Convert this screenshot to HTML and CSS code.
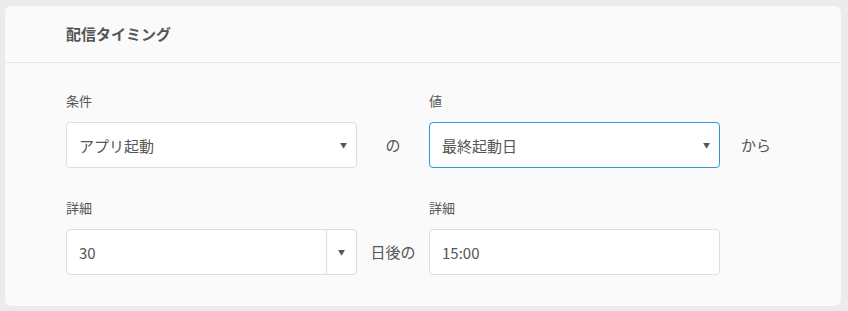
FILE: index.html
```html
<!DOCTYPE html>
<html lang="ja">
<head>
    <meta charset="UTF-8">
    <meta name="viewport" content="width=device-width, initial-scale=1.0">
    <title>配信タイミング</title>
    <link rel="stylesheet" href="styles.css">
</head>
<body>
    <div class="card">
        <div class="card-head">配信タイミング</div>

        <div class="card-body">
            <!-- condition row -->
            <div class="row">
                <div class="field">
                    <p class="label">条件</p>
                    <div class="select">
                        <span class="value">アプリ起動</span>
                        <span class="arrow">&#9660;</span>
                    </div>
                </div>
                <div class="joint">の</div>
                <div class="field">
                    <p class="label">値</p>
                    <div class="select focus">
                        <span class="value">最終起動日</span>
                        <span class="arrow">&#9660;</span>
                    </div>
                </div>
                <div class="tail">から</div>
            </div>

            <!-- detail row -->
            <div class="row">
                <div class="field">
                    <p class="label">詳細</p>
                    <div class="select split">
                        <span class="value">30</span>
                        <span class="arrow">&#9660;</span>
                    </div>
                </div>
                <div class="joint">日後の</div>
                <div class="field">
                    <p class="label">詳細</p>
                    <div class="input">
                        <span class="value">15:00</span>
                    </div>
                </div>
            </div>
        </div>
    </div>
</body>
</html>
```

FILE: styles.css
```css
body{
    margin: 0;
    padding: 6px 7px 5px 5px;
    background-color: #ebebeb;
    font-family: "Noto Sans CJK JP", "Noto Sans", sans-serif;
    color: #555;
}
.card{
    background-color: #fafafa;
    border-radius: 6px;
    height: 300px;
    box-sizing: border-box;
}
.card-head{
    height: 56px;
    line-height: 56px;
    padding-left: 61px;
    font-size: 15px;
    font-weight: bold;
    color: #555;
    border-bottom: 1px solid #e6e6e6;
}
.card-body{
    padding: 28px 0 0 61px;
}
.row{
    display: grid;
    grid-template-columns: 291px 72px 291px auto;
    align-items: end;
    margin-bottom: 30px;
}
.label{
    margin: 0 0 11px 0;
    font-size: 13px;
    line-height: 20px;
    color: #555;
}
.select,
.input{
    height: 46px;
    box-sizing: border-box;
    border: 1px solid #dadde3;
    border-radius: 4px;
    background-color: #fff;
    display: flex;
    align-items: center;
    font-size: 15px;
}
.select.focus{
    border-color: #2b9ad6;
}
.value{
    flex: 1;
    padding-left: 12px;
}
.arrow{
    width: 16px;
    text-align: left;
    font-size: 7px;
    color: #555;
}
.split .arrow{
    width: 29px;
    height: 100%;
    border-left: 1px solid #dadde3;
    display: flex;
    align-items: center;
    justify-content: center;
}
.joint{
    height: 46px;
    line-height: 46px;
    text-align: center;
    font-size: 15px;
}
.tail{
    height: 46px;
    line-height: 46px;
    padding-left: 21px;
    font-size: 15px;
}
```
